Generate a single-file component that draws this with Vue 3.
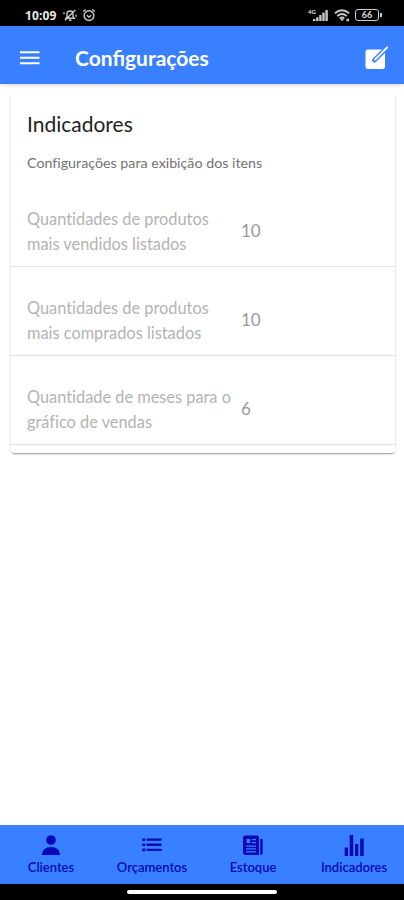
<script setup>
import {ref} from 'vue'

const indicators = ref([
  {id: "sold", label: ["Quantidades de produtos", "mais vendidos listados"], value: 10},
  {id: "bought", label: ["Quantidades de produtos", "mais comprados listados"], value: 10},
  {id: "months", label: ["Quantidade de meses para o", "gráfico de vendas"], value: 6}
])

const tabs = [
  {id: "clientes", label: "Clientes"},
  {id: "orcamentos", label: "Orçamentos"},
  {id: "estoque", label: "Estoque"},
  {id: "indicadores", label: "Indicadores"}
]

const selected = ref(null)
</script>


<template>
  <div class="screen">
    <div class="status-bar">
      <span class="clock">10:09</span>
      <svg class="status-icon mute" viewBox="0 0 14 14">
        <path d="M3 10.2h8.3L10 8.5V6a3 3 0 0 0-6 0v2.5zM5.8 12.2h2.6M2 12.3 12.2 2M1 6.2v-2M13 6.8v2"/>
      </svg>
      <svg class="status-icon" viewBox="0 0 14 14">
        <circle cx="7" cy="7.6" r="4.9"/>
        <path d="M1.3 3.6 3.6 1.5M12.7 3.6l-2.3-2.1M4.8 7.2 7 9l2.3-1.8"/>
      </svg>
      <span class="spacer"></span>
      <svg class="signal" viewBox="0 0 20 14">
        <text x="-2" y="6">4G</text>
        <path d="M4.2 13v-2M7.3 13V9.2M10.4 13V7M13.5 13V4.6M16.6 13V2"/>
      </svg>
      <svg class="wifi" viewBox="0 0 17 14">
        <path d="M.9 5.3q7.1-6.2 14.2 0M3.3 8.1q4.7-4 9.4 0M5.7 10.5q2.3-1.8 4.6 0"/>
        <path class="solid" d="m8 13.2-2-2.4h4zM12.5 10.8h2.5v2.5h-2.5z"/>
      </svg>
      <span class="battery">66</span>
    </div>

    <header class="toolbar">
      <svg class="menu" viewBox="0 0 20 14">
        <path d="M0 1.2h19.5M0 6.7h19.5M0 12.2h19.5"/>
      </svg>
      <h1>Configurações</h1>
      <svg class="edit" viewBox="0 0 24 24">
        <rect x="0.5" y="3.5" width="19.5" height="19.5" rx="2.5"/>
        <path class="gap" d="M9.5 14.2 22.5 1.2"/>
        <path class="pen" d="M10 13.7 22.3 1.4"/>
      </svg>
    </header>

    <main>
      <section class="card">
        <h2>Indicadores</h2>
        <p>Configurações para exibição dos itens</p>
        <div v-for="item in indicators" :key="item.id" class="item">
          <div class="label">
            <div v-for="line in item.label" :key="line">{{ line }}</div>
          </div>
          <span class="value">{{ item.value }}</span>
        </div>
      </section>
    </main>

    <nav class="tabs">
      <a v-for="tab in tabs" :key="tab.id" class="tab" @click="selected = tab.id">
        <svg viewBox="0 0 22 22">
          <template v-if="tab.id === 'clientes'">
            <circle cx="11" cy="6" r="4.8"/>
            <path d="M2 21c0-5 3.5-8 9-8s9 3 9 8z"/>
          </template>
          <template v-else-if="tab.id === 'orcamentos'">
            <path d="M1.3 4.4h3V7h-3zM5.6 4.5h15v2.3h-15zM1.3 9.5h3v2.6h-3zM5.6 9.6h15v2.3h-15zM1.3 14.6h3v2.6h-3zM5.6 14.7h15V17h-15z"/>
          </template>
          <template v-else-if="tab.id === 'estoque'">
            <path fill-rule="evenodd" d="M3 1.4h12a2 2 0 0 1 2 2V21H4a3 3 0 0 1-3-3V3.4a2 2 0 0 1 2-2zM4.5 5v4h3.7V5zM10 5v1.3h4V5zM10 8v1.3h4V8zM4 11.4v1.3h10v-1.3zM4 14.3v1.3h10v-1.3zM4 17.2v1.3h10v-1.3z"/>
            <path d="M18.2 5h1.3a1.2 1.2 0 0 1 1.2 1.2V18.4a2.5 2.5 0 0 1-2.5 2.5z"/>
          </template>
          <template v-else>
            <path d="M1.7 13.5H5V22H1.7zM6.7 1h3.5v21H6.7zM12 10h3.3v12H12zM17.2 4.5h3.5V22h-3.5z"/>
          </template>
        </svg>
        <span>{{ tab.label }}</span>
      </a>
    </nav>

    <div class="gesture-bar"><span></span></div>
  </div>
</template>

<style>
body {
  background: #fff;
}
</style>

<style scoped>
.screen {
  display: flex;
  flex-direction: column;
  width: 404px;
  height: 900px;
  overflow: hidden;
  background: #fff;
  font-family: Lato, "Open Sans", sans-serif;
}

.status-bar {
  display: flex;
  align-items: center;
  flex: none;
  box-sizing: border-box;
  height: 26px;
  padding: 4px 22px 0 25px;
  background: #000;
  color: #e8e8e8;
}

.clock {
  width: 38px;
  padding-top: 1px;
  font-family: "Open Sans", sans-serif;
  font-size: 12px;
  font-weight: 700;
  letter-spacing: 0.1px;
  line-height: 16px;
}

.status-icon {
  width: 14px;
  height: 14px;
  margin-right: 5px;
  fill: none;
  stroke: #c8c8c8;
  stroke-width: 1.4;
}

.spacer {
  flex: 1;
}

.signal {
  width: 20px;
  height: 14px;
  margin-right: 4px;
  overflow: visible;
  stroke: #c8c8c8;
  stroke-width: 2.4;
}

.signal text {
  fill: #ddd;
  stroke: none;
  font-size: 6px;
  font-weight: 900;
}

.wifi {
  width: 17px;
  height: 14px;
  margin-right: 4px;
  fill: none;
  stroke: #c8c8c8;
  stroke-width: 1.9;
}

.wifi .solid {
  fill: #c8c8c8;
  stroke: none;
}

.battery {
  position: relative;
  box-sizing: border-box;
  width: 24px;
  height: 12px;
  margin-right: 3px;
  border: 1.5px solid #ccc;
  border-radius: 3px;
  color: #ccc;
  font-size: 9px;
  font-weight: 900;
  line-height: 10px;
  text-align: center;
}

.battery::after {
  content: "";
  position: absolute;
  top: 3px;
  right: -4px;
  width: 2px;
  height: 4px;
  background: #ccc;
}

.toolbar {
  display: flex;
  align-items: center;
  flex: none;
  box-sizing: border-box;
  height: 58px;
  padding: 5px 15px 0 20px;
  background: #3880ff;
  box-shadow: 0 1px 5px rgba(0, 0, 0, 0.16);
  color: #fff;
}

.menu {
  width: 20px;
  height: 14px;
  stroke: #fff;
  stroke-width: 2;
}

.toolbar h1 {
  flex: 1;
  margin: 0 0 0 35px;
  font-size: 21px;
  font-weight: 700;
  line-height: 28px;
}

.edit {
  width: 24px;
  height: 24px;
  fill: #fff;
}

.edit .gap {
  stroke: #3880ff;
  stroke-width: 4.6;
  stroke-linecap: round;
}

.edit .pen {
  stroke: #fff;
  stroke-width: 1.9;
  stroke-linecap: round;
}

main {
  flex: 1;
  padding: 10px 9px 0 11px;
}

.card {
  box-sizing: border-box;
  height: 359px;
  padding-top: 17px;
  border-radius: 0 0 4px 4px;
  box-shadow: 0 2px 1px -1px rgba(0, 0, 0, 0.24), 0 1px 3px rgba(0, 0, 0, 0.2);
  clip-path: inset(1px -4px -6px -4px);
  font-variant-ligatures: none;
}

.card h2 {
  margin: 0 0 0 16px;
  color: #222;
  font-size: 21px;
  font-weight: 400;
  line-height: 26px;
}

.card p {
  margin: 16px 0 18px 16px;
  color: #737373;
  font-size: 14.25px;
  line-height: 20px;
}

.item {
  display: flex;
  align-items: center;
  box-sizing: border-box;
  height: 89px;
  padding: 18px 0 0 16px;
  border-bottom: 1px solid #e0e0e0;
  color: #b3b3b3;
}

.item:nth-of-type(1) {
  height: 76px;
  padding-top: 5px;
}

.label {
  width: 214px;
  font-size: 16.35px;
  line-height: 25px;
  white-space: nowrap;
}

.value {
  margin-top: -1px;
  color: #999;
  font-size: 17px;
}

.tabs {
  display: flex;
  flex: none;
  height: 59px;
  background: #3880ff;
}

.tab {
  display: flex;
  flex: 1;
  flex-direction: column;
  align-items: center;
  padding: 9px 0 0 1px;
  color: #0909b5;
  font-size: 13px;
  line-height: 16px;
  font-weight: 600;
  cursor: pointer;
}

.tab svg {
  width: 22px;
  height: 22px;
  margin-bottom: 3px;
  fill: currentColor;
}

.gesture-bar {
  display: flex;
  justify-content: center;
  flex: none;
  box-sizing: border-box;
  height: 16px;
  padding-top: 6px;
  background: #000;
}

.gesture-bar span {
  width: 150px;
  height: 4px;
  border-radius: 2px;
  background: #fff;
}
</style>
